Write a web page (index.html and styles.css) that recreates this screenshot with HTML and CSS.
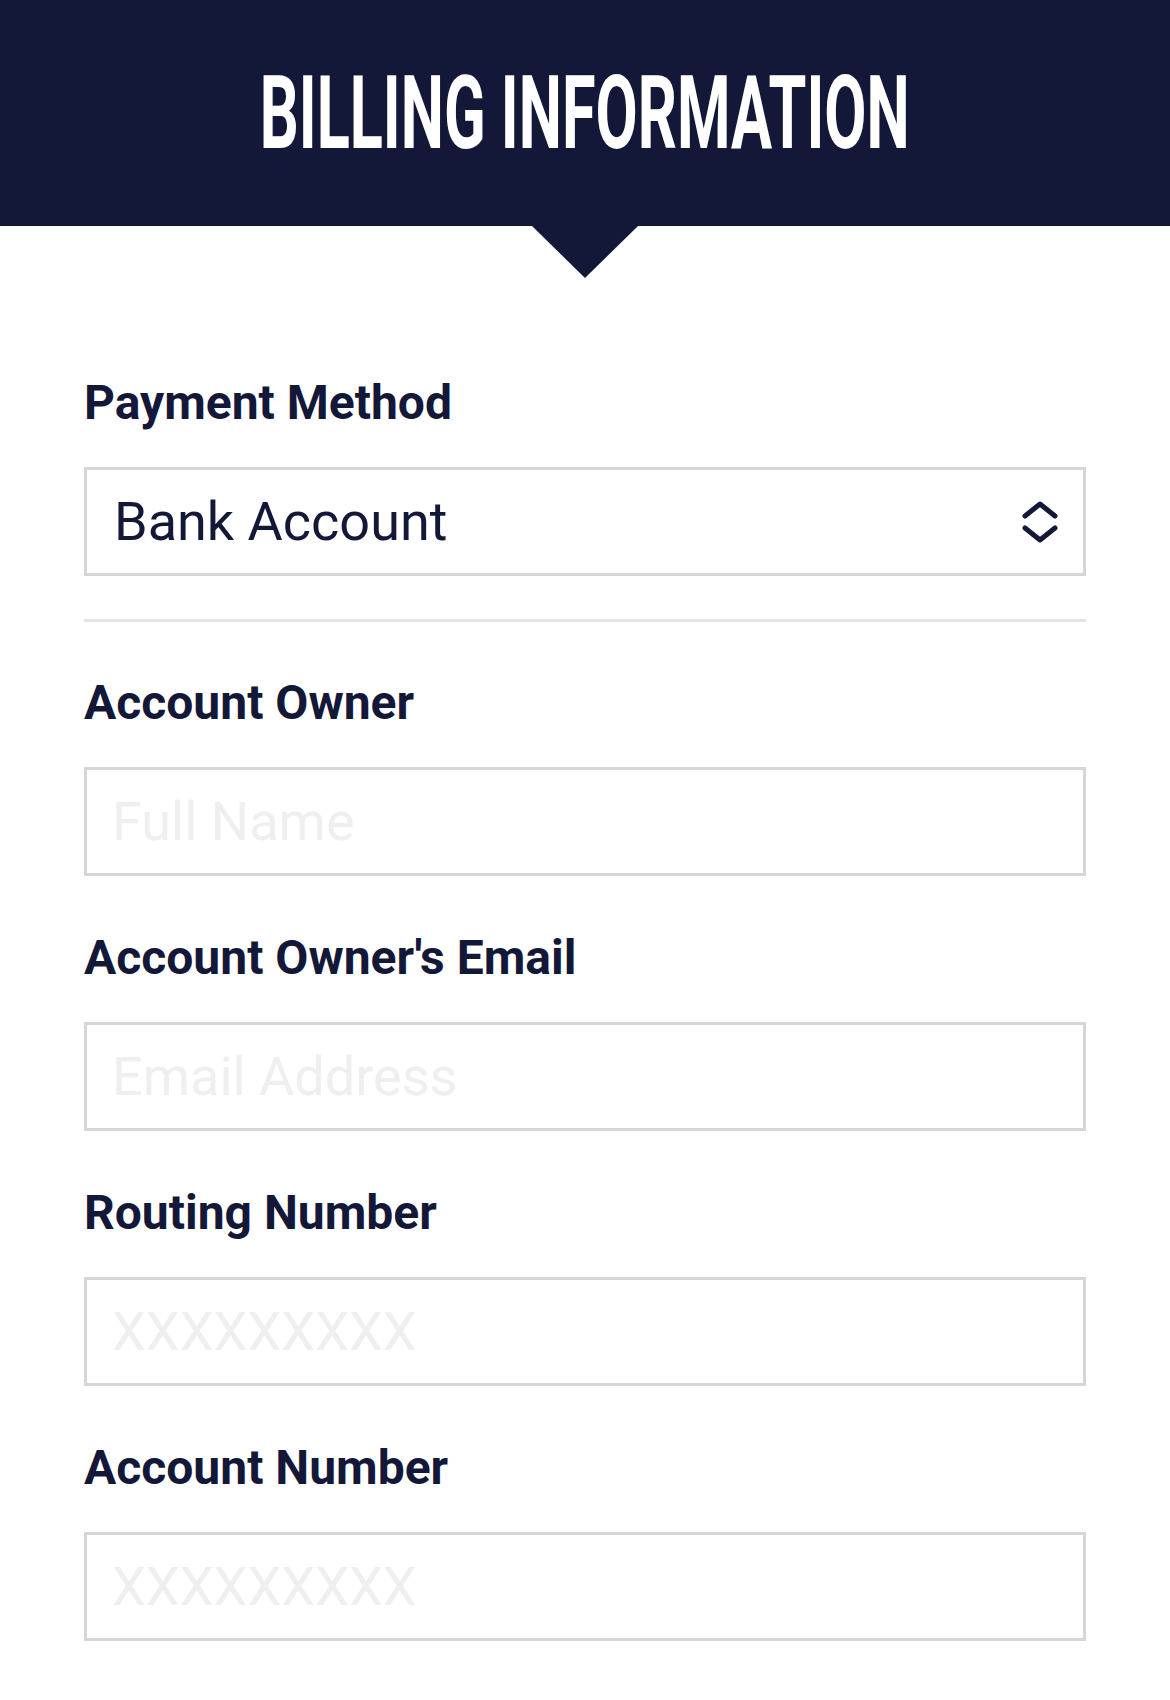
FILE: index.html
```
<!DOCTYPE html>
<html lang="en">
<head>
  <meta charset="UTF-8" />
  <meta name="viewport" content="width=device-width, initial-scale=1.0" />
  <title>Billing Information</title>
  <link rel="stylesheet" href="styles.css">
</head>
<body>
  <header class="banner">
    <h1><span>BILLING INFORMATION</span></h1>
  </header>

  <form class="billing">
    <div class="field">
      <label class="label">Payment Method</label>
      <div class="select">
        <span>Bank Account</span>
        <svg width="36" height="44" viewBox="0 0 36 44" fill="none" stroke="#141838" stroke-width="5" stroke-linecap="round" stroke-linejoin="round">
          <path d="M3 16 L18 4 L33 16" />
          <path d="M3 28 L18 40 L33 28" />
        </svg>
      </div>
    </div>

    <hr class="divider">

    <div class="field">
      <label class="label">Account Owner</label>
      <input class="input" type="text" placeholder="Full Name">
    </div>

    <div class="field">
      <label class="label">Account Owner's Email</label>
      <input class="input" type="email" placeholder="Email Address">
    </div>

    <div class="field">
      <label class="label">Routing Number</label>
      <input class="input" type="text" placeholder="XXXXXXXXX">
    </div>

    <div class="field">
      <label class="label">Account Number</label>
      <input class="input" type="text" placeholder="XXXXXXXXX">
    </div>
  </form>
</body>
</html>
```

FILE: styles.css
```
* {
  margin: 0;
  padding: 0;
  box-sizing: border-box;
  font-family: Roboto, 'Liberation Sans', sans-serif;
}

body {
  background: #ffffff;
  color: #141838;
}

.banner {
  position: relative;
  height: 226px;
  background: #141838;
  display: flex;
  align-items: center;
  justify-content: center;
}

/* the little pointer under the banner */
.banner::after {
  content: "";
  position: absolute;
  left: 50%;
  bottom: -52px;
  margin-left: -53px;
  border-left: 53px solid transparent;
  border-right: 53px solid transparent;
  border-top: 52px solid #141838;
}

.banner h1 {
  color: #fff;
  font-size: 102px;
  font-weight: 700;
  line-height: 1;
  white-space: nowrap;
}

.banner h1 span {
  display: inline-block;
  transform: scaleX(0.6);
}

.billing {
  width: 1002px;
  margin-left: 84px;
  padding-top: 147px;
}

.field {
  margin-bottom: 52px;
}

.label {
  display: block;
  font-size: 48px;
  font-weight: 700;
  line-height: 60px;
  margin-bottom: 34px;
}

.select,
.input {
  display: flex;
  width: 100%;
  height: 109px;
  border: 3px solid #d5d5da;
  background: #fff;
  font-size: 54px;
  color: #141838;
  padding: 0 28px 0 25px;
}

.select {
  align-items: center;
  justify-content: space-between;
  padding-left: 27px;
  padding-right: 25px;
}

.input {
  outline: none;
}

.input::placeholder {
  color: #efeff1;
}

.billing .field:first-child {
  margin-bottom: 0;
}

.divider {
  border: none;
  height: 3px;
  background: #e4e4e8;
  margin: 43px 0 51px;
}
```
